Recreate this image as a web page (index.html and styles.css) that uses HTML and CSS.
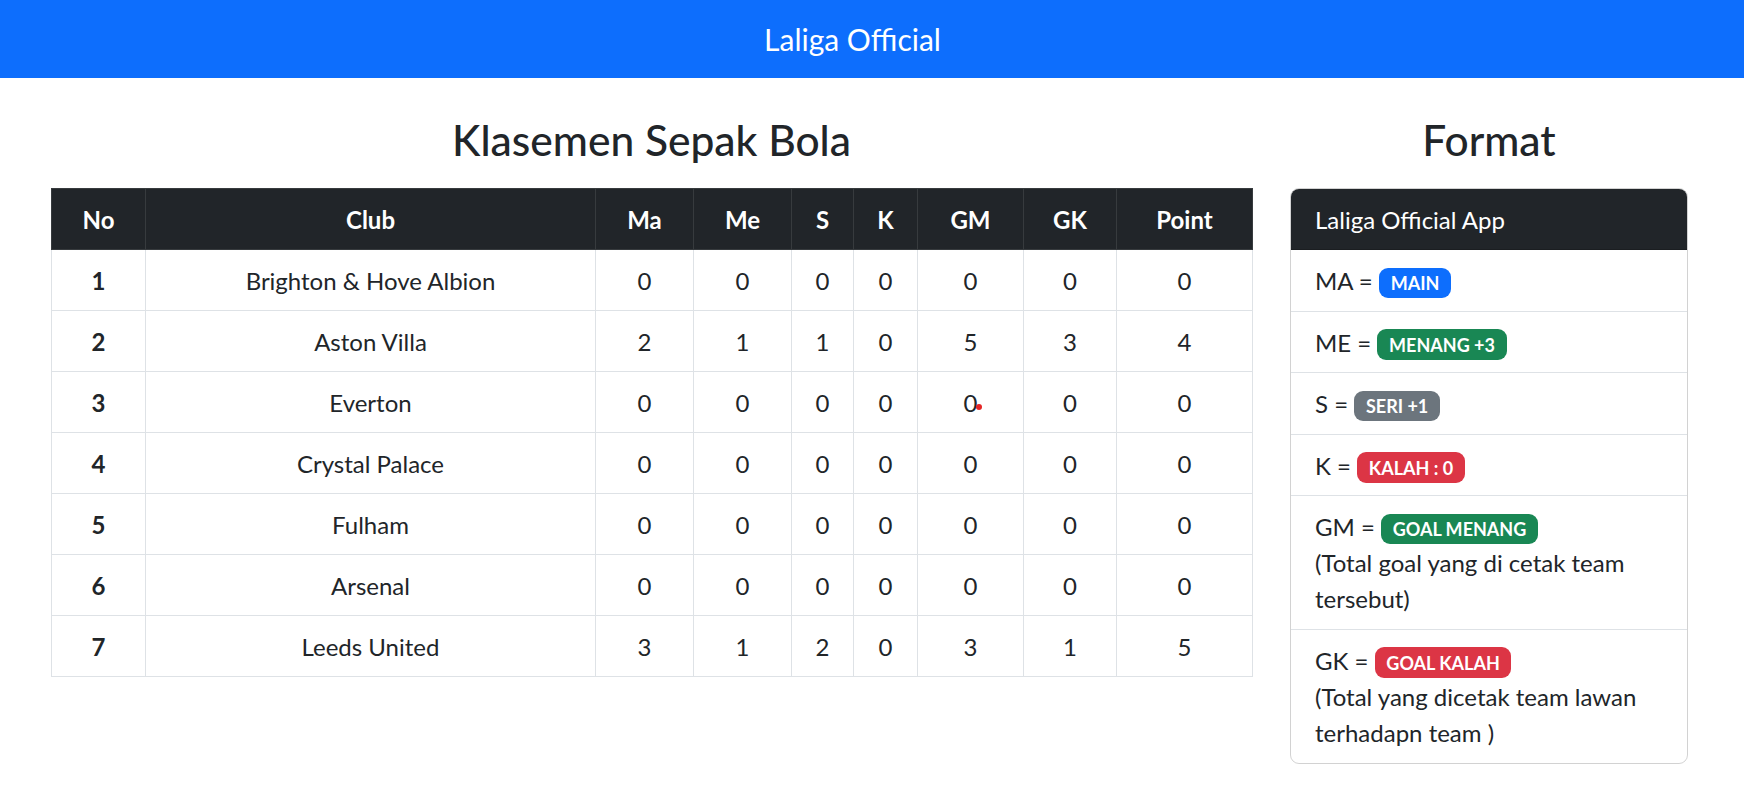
FILE: index.html
```html
<!DOCTYPE html>
<html lang="id">
<head>
<meta charset="utf-8">
<title>Laliga Official</title>
<link rel="stylesheet" href="styles.css">
</head>
<body>
<nav class="navbar">
  <span class="brand">Laliga Official</span>
</nav>

<main class="layout">
  <section class="standings">
    <h2 class="title">Klasemen Sepak Bola</h2>
    <table class="table">
      <colgroup>
        <col class="c-no"><col class="c-club"><col class="c-ma"><col class="c-me"><col class="c-s"><col class="c-k"><col class="c-gm"><col class="c-gk"><col class="c-pt">
      </colgroup>
      <thead>
        <tr><th>No</th><th>Club</th><th>Ma</th><th>Me</th><th>S</th><th>K</th><th>GM</th><th>GK</th><th>Point</th></tr>
      </thead>
      <tbody>
        <tr><th>1</th><td>Brighton &amp; Hove Albion</td><td>0</td><td>0</td><td>0</td><td>0</td><td>0</td><td>0</td><td>0</td></tr>
        <tr><th>2</th><td>Aston Villa</td><td>2</td><td>1</td><td>1</td><td>0</td><td>5</td><td>3</td><td>4</td></tr>
        <tr><th>3</th><td>Everton</td><td>0</td><td>0</td><td>0</td><td>0</td><td><span class="dotted">0</span></td><td>0</td><td>0</td></tr>
        <tr><th>4</th><td>Crystal Palace</td><td>0</td><td>0</td><td>0</td><td>0</td><td>0</td><td>0</td><td>0</td></tr>
        <tr><th>5</th><td>Fulham</td><td>0</td><td>0</td><td>0</td><td>0</td><td>0</td><td>0</td><td>0</td></tr>
        <tr><th>6</th><td>Arsenal</td><td>0</td><td>0</td><td>0</td><td>0</td><td>0</td><td>0</td><td>0</td></tr>
        <tr><th>7</th><td>Leeds United</td><td>3</td><td>1</td><td>2</td><td>0</td><td>3</td><td>1</td><td>5</td></tr>
      </tbody>
    </table>
  </section>

  <aside class="format">
    <h2 class="title">Format</h2>
    <div class="card">
      <div class="card-header">Laliga Official App</div>
      <ul class="list">
        <li class="item">MA = <span class="badge primary">MAIN</span></li>
        <li class="item">ME = <span class="badge success">MENANG +3</span></li>
        <li class="item">S = <span class="badge secondary">SERI +1</span></li>
        <li class="item">K = <span class="badge danger">KALAH : 0</span></li>
        <li class="item">GM = <span class="badge success">GOAL MENANG</span><br>(Total goal yang di cetak team tersebut)</li>
        <li class="item">GK = <span class="badge danger">GOAL KALAH</span><br>(Total yang dicetak team lawan terhadapn team )</li>
      </ul>
    </div>
  </aside>
</main>
</body>
</html>
```
FILE: styles.css
```css
* { box-sizing: border-box; }

body {
  margin: 0;
  font-family: "Lato", "Liberation Sans", sans-serif;
  font-size: 24px;
  line-height: 1.5;
  color: #212529;
  background: #fff;
}

.navbar {
  height: 78px;
  background: #0d6efd;
  display: flex;
  align-items: center;
  justify-content: center;
  padding-right: 39px;
}

.brand {
  color: #fff;
  font-size: 30px;
  line-height: 1.5;
}

.layout {
  display: flex;
  gap: 38px;
  padding: 36px 56px 0 51px;
}

.standings { flex: 1; min-width: 0; }
.format { width: 398px; flex: none; }

.title {
  margin: 0 0 23px;
  font-size: 42.5px;
  font-weight: 500;
  line-height: 1.2;
  text-align: center;
  color: #212529;
}

.table {
  width: 100%;
  border-collapse: collapse;
  table-layout: fixed;
}

.c-no { width: 94px; }
.c-club { width: 450px; }
.c-ma { width: 98px; }
.c-me { width: 98px; }
.c-s { width: 62px; }
.c-k { width: 64px; }
.c-gm { width: 106px; }
.c-gk { width: 93px; }
.c-pt { width: 136px; }

.table th,
.table td {
  padding: 13px 12px 11px;
  text-align: center;
  border: 1px solid #dee2e6;
  vertical-align: top;
}

.table thead th {
  background: #212529;
  color: #fff;
  font-weight: 700;
  border-color: #373b3e;
}

.table tbody th { font-weight: 700; }

.dotted { position: relative; }
.dotted::after {
  content: "";
  position: absolute;
  left: calc(100% - 1px);
  top: 16px;
  width: 6px;
  height: 6px;
  border-radius: 50%;
  background: #e52626;
}

.card {
  border: 1px solid rgba(0, 0, 0, 0.175);
  border-radius: 9px;
  overflow: hidden;
}

.card-header {
  background: #212529;
  color: #fff;
  padding: 13px 24px 11px;
  border-bottom: 1px solid rgba(0, 0, 0, 0.175);
}

.list {
  list-style: none;
  margin: 0;
  padding: 0;
}

.item {
  padding: 13px 24px 11.5px;
  border-bottom: 1px solid #dee2e6;
}

.item:last-child { border-bottom: 0; padding-bottom: 12.5px; }

.badge {
  display: inline-block;
  padding: 6.3px 11.7px;
  font-size: 18px;
  font-weight: 700;
  line-height: 1;
  color: #fff;
  border-radius: 9px;
  white-space: nowrap;
  vertical-align: baseline;
}

.primary { background: #0d6efd; }
.success { background: #198754; }
.secondary { background: #6c757d; }
.danger { background: #dc3545; }
```
